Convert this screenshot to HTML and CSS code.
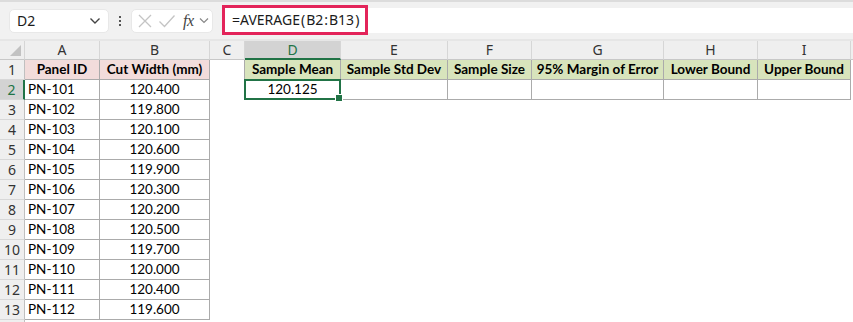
FILE: index.html
```html
<!DOCTYPE html>
<html lang="en">

<head>
    <meta charset="UTF-8">
    <title>Sheet</title>
    <link rel="stylesheet" href="styles.css">
</head>

<body>

    <div class="toolbar">
        <div class="namebox">
            <span>D2</span>
            <svg width="12" height="8" viewBox="0 0 12 8"><path d="M1.5 1.5 L6 6 L10.5 1.5" fill="none" stroke="#444" stroke-width="1.4"/></svg>
        </div>
        <div class="dots"><i></i><i></i><i></i></div>
        <div class="fxbox">
            <svg width="16" height="16" viewBox="0 0 16 16"><path d="M2 2 L14 14 M14 2 L2 14" stroke="#c4c4c4" stroke-width="1.3"/></svg>
            <svg width="18" height="16" viewBox="0 0 18 16"><path d="M1.5 8.5 L6.5 13.5 L16.5 2.5" fill="none" stroke="#c4c4c4" stroke-width="1.3"/></svg>
            <span class="fx">fx</span>
            <svg width="10" height="7" viewBox="0 0 10 7"><path d="M1 1.5 L5 5.5 L9 1.5" fill="none" stroke="#888" stroke-width="1.2"/></svg>
        </div>
        <div class="formula">
            <span class="hl">=AVERAGE<span class="p">(</span>B2<span class="p">:</span>B13<span class="p">)</span></span>
        </div>
    </div>

    <div class="grid">
        <!-- column headers -->
        <div class="ch corner"><span class="tri"></span></div>
        <div class="ch">A</div>
        <div class="ch">B</div>
        <div class="ch">C</div>
        <div class="ch sel">D</div>
        <div class="ch">E</div>
        <div class="ch">F</div>
        <div class="ch">G</div>
        <div class="ch">H</div>
        <div class="ch">I</div>
        <div class="ch"></div>

        <!-- row 1 -->
        <div class="rh">1</div>
        <div class="c g th pink">Panel ID</div>
        <div class="c g th pink">Cut Width (mm)</div>
        <div class="c edge"></div>
        <div class="c g th green">Sample Mean</div>
        <div class="c g th green">Sample Std Dev</div>
        <div class="c g th green">Sample Size</div>
        <div class="c g th green">95% Margin of Error</div>
        <div class="c g th green">Lower Bound</div>
        <div class="c g th green">Upper Bound</div>
        <div class="c"></div>

        <!-- row 2 -->
        <div class="rh sel">2</div>
        <div class="c g l">PN-101</div>
        <div class="c g">120.400</div>
        <div class="c edge"></div>
        <div class="c g active">120.125<span class="handle"></span></div>
        <div class="c g"></div>
        <div class="c g"></div>
        <div class="c g"></div>
        <div class="c g"></div>
        <div class="c g"></div>
        <div class="c"></div>
    </div>

    <div class="grid rows" id="rows"></div>

    <script>
        const data = [
            ["PN-102", "119.800"], ["PN-103", "120.100"], ["PN-104", "120.600"],
            ["PN-105", "119.900"], ["PN-106", "120.300"], ["PN-107", "120.200"],
            ["PN-108", "120.500"], ["PN-109", "119.700"], ["PN-110", "120.000"],
            ["PN-111", "120.400"], ["PN-112", "119.600"]
        ];
        let html = "";
        data.forEach((r, i) => {
            html += `<div class="rh">${i + 3}</div>`;
            html += `<div class="c g l">${r[0]}</div>`;
            html += `<div class="c g">${r[1]}</div>`;
            for (let k = 0; k < 8; k++) html += `<div class="c"></div>`;
        });
        html += `<div class="rh tail"></div>`;
        document.getElementById("rows").innerHTML = html;
    </script>

</body>

</html>
```

FILE: styles.css
```css
body {
    margin: 0;
    width: 853px;
    height: 322px;
    overflow: hidden;
    background: #fff;
    font-family: Lato, "Noto Sans", sans-serif;
    color: #000;
}

.toolbar {
    height: 41px;
    border-top: 2px solid #dcdcdc;
    border-bottom: 2px solid #e6e6e6;
    background: #f1f1f1;
    display: flex;
    align-items: center;
    box-sizing: border-box;
}

.namebox {
    margin-left: 9px;
    width: 100px;
    height: 24px;
    box-sizing: border-box;
    background: #fff;
    border-radius: 5px;
    border: 1px solid #e8e8e8;
    display: flex;
    align-items: center;
    justify-content: space-between;
    padding: 0 7px 0 7px;
    font-family: "Noto Sans", sans-serif;
    font-size: 14px;
    color: #1b1b1b;
}

.dots {
    width: 22px;
    display: flex;
    flex-direction: column;
    align-items: center;
    gap: 2px;
}

.dots i {
    width: 2px;
    height: 2px;
    background: #555;
}

.fxbox {
    width: 82px;
    height: 24px;
    box-sizing: border-box;
    background: #fff;
    border-radius: 5px;
    border: 1px solid #e8e8e8;
    display: flex;
    align-items: center;
    padding-left: 5px;
    gap: 5px;
}

.fx {
    font-family: "Liberation Serif", serif;
    font-style: italic;
    font-size: 16px;
    color: #444;
    margin-left: 2px;
    letter-spacing: -0.5px;
}

.formula {
    margin-left: 9px;
    flex: 1;
    height: 25px;
    background: #fff;
    display: flex;
    align-items: center;
}

.hl {
    height: 30px;
    width: 146px;
    box-sizing: border-box;
    border: 3px solid #e3245a;
    display: flex;
    align-items: center;
    padding-left: 7px;
    margin-top: -2px;
    font-family: "Noto Sans", sans-serif;
    font-size: 14px;
    color: #1b1b1b;
}

.hl .p {
    padding: 0 1px;
}

.grid {
    display: grid;
    grid-template-columns: 25px 75px 110px 35px 96px 107px 84px 132px 94px 93px 40px;
    grid-template-rows: 19px 20px 20px;
    font-size: 13.5px;
}

.rows {
    grid-template-rows: repeat(11, 20px) 2px;
}

.ch {
    background: #efefef;
    border-right: 1px solid #d6d6d6;
    border-bottom: 1px solid #c8c8c8;
    box-sizing: border-box;
    text-align: center;
    line-height: 18px;
    font-size: 14px;
    color: #333;
    font-family: "Noto Sans", sans-serif;
}

.ch.sel {
    background: #d3d3d3;
    color: #217346;
    border-bottom: 2px solid #217346;
}

.corner {
    position: relative;
}

.tri {
    position: absolute;
    right: 3px;
    bottom: 3px;
    width: 0;
    height: 0;
    border-left: 11px solid transparent;
    border-bottom: 11px solid #c2c2c2;
}

.rh {
    background: #efefef;
    border-right: 1px solid #c0c0c0;
    border-bottom: 1px solid #d8d8d8;
    box-sizing: border-box;
    text-align: center;
    line-height: 19px;
    font-size: 14px;
    color: #333;
    font-family: "Noto Sans", sans-serif;
}

.rh.tail {
    border-bottom: none;
}

.rh.sel {
    background: #d3d3d3;
    color: #217346;
    border-right: 2px solid #217346;
}

.c {
    box-sizing: border-box;
    line-height: 19px;
    text-align: center;
    white-space: nowrap;
    overflow: hidden;
}

.g {
    border-right: 1px solid #ababab;
    border-bottom: 1px solid #ababab;
}

.l {
    text-align: left;
    padding-left: 3px;
}

.edge {
    border-right: 1px solid #ababab;
}

.th {
    font-weight: bold;
}

.pink {
    background: #f2dcdb;
}

.green {
    background: #d8e4bc;
}

.active {
    position: relative;
    overflow: visible;
    border: 2px solid #217346;
    margin: -1px 0 0 -1px;
    width: 97px;
    height: 21px;
    line-height: 17px;
}

.handle {
    position: absolute;
    right: -4px;
    bottom: -4px;
    width: 6px;
    height: 6px;
    background: #217346;
    border: 1px solid #fff;
}
```
